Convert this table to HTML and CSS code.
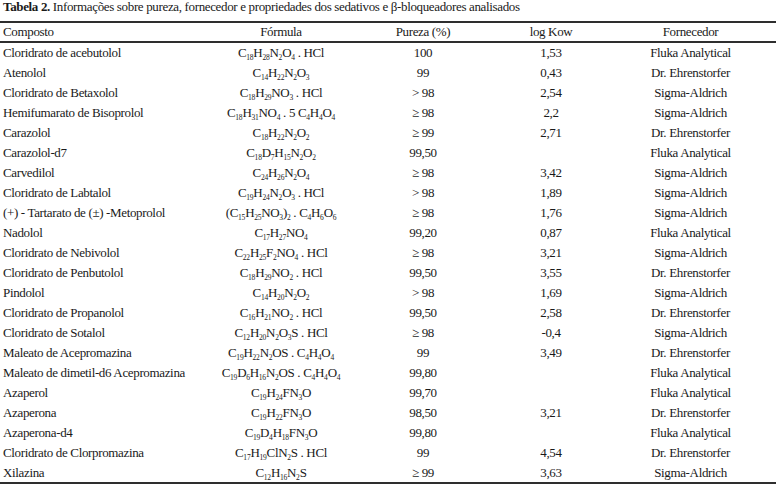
FILE: index.html
```html
<!DOCTYPE html>
<html lang="pt">
<head>
<meta charset="utf-8">
<title>Tabela 2</title>
<link rel="stylesheet" href="styles.css">
</head>
<body>
<div class="caption"><b>Tabela 2.</b> Informações sobre pureza, fornecedor e propriedades dos sedativos e β-bloqueadores analisados</div>
<div class="data" role="table">
<div class="row head" role="row"><span class="left">Composto</span><span>Fórmula</span><span>Pureza (%)</span><span>log Kow</span><span>Fornecedor</span></div>
<div class="body">
<div class="row" role="row"><span class="left">Cloridrato de acebutolol</span><span>C<sub>18</sub>H<sub>28</sub>N<sub>2</sub>O<sub>4</sub> . HCl</span><span>100</span><span>1,53</span><span>Fluka Analytical</span></div>
<div class="row" role="row"><span class="left">Atenolol</span><span>C<sub>14</sub>H<sub>22</sub>N<sub>2</sub>O<sub>3</sub></span><span>99</span><span>0,43</span><span>Dr. Ehrenstorfer</span></div>
<div class="row" role="row"><span class="left">Cloridrato de Betaxolol</span><span>C<sub>18</sub>H<sub>29</sub>NO<sub>3</sub> . HCl</span><span>&gt; 98</span><span>2,54</span><span>Sigma-Aldrich</span></div>
<div class="row" role="row"><span class="left">Hemifumarato de Bisoprolol</span><span>C<sub>18</sub>H<sub>31</sub>NO<sub>4</sub> . 5 C<sub>4</sub>H<sub>4</sub>O<sub>4</sub></span><span>≥ 98</span><span>2,2</span><span>Sigma-Aldrich</span></div>
<div class="row" role="row"><span class="left">Carazolol</span><span>C<sub>18</sub>H<sub>22</sub>N<sub>2</sub>O<sub>2</sub></span><span>≥ 99</span><span>2,71</span><span>Dr. Ehrenstorfer</span></div>
<div class="row" role="row"><span class="left">Carazolol-d7</span><span>C<sub>18</sub>D<sub>7</sub>H<sub>15</sub>N<sub>2</sub>O<sub>2</sub></span><span>99,50</span><span></span><span>Fluka Analytical</span></div>
<div class="row" role="row"><span class="left">Carvedilol</span><span>C<sub>24</sub>H<sub>26</sub>N<sub>2</sub>O<sub>4</sub></span><span>≥ 98</span><span>3,42</span><span>Sigma-Aldrich</span></div>
<div class="row" role="row"><span class="left">Cloridrato de Labtalol</span><span>C<sub>19</sub>H<sub>24</sub>N<sub>2</sub>O<sub>3</sub> . HCl</span><span>&gt; 98</span><span>1,89</span><span>Sigma-Aldrich</span></div>
<div class="row" role="row"><span class="left">(+) - Tartarato de (±) -Metoprolol</span><span>(C<sub>15</sub>H<sub>25</sub>NO<sub>3</sub>)<sub>2</sub> . C<sub>4</sub>H<sub>6</sub>O<sub>6</sub></span><span>≥ 98</span><span>1,76</span><span>Sigma-Aldrich</span></div>
<div class="row" role="row"><span class="left">Nadolol</span><span>C<sub>17</sub>H<sub>27</sub>NO<sub>4</sub></span><span>99,20</span><span>0,87</span><span>Fluka Analytical</span></div>
<div class="row" role="row"><span class="left">Cloridrato de Nebivolol</span><span>C<sub>22</sub>H<sub>25</sub>F<sub>2</sub>NO<sub>4</sub> . HCl</span><span>≥ 98</span><span>3,21</span><span>Sigma-Aldrich</span></div>
<div class="row" role="row"><span class="left">Cloridrato de Penbutolol</span><span>C<sub>18</sub>H<sub>29</sub>NO<sub>2</sub> . HCl</span><span>99,50</span><span>3,55</span><span>Dr. Ehrenstorfer</span></div>
<div class="row" role="row"><span class="left">Pindolol</span><span>C<sub>14</sub>H<sub>20</sub>N<sub>2</sub>O<sub>2</sub></span><span>&gt; 98</span><span>1,69</span><span>Sigma-Aldrich</span></div>
<div class="row" role="row"><span class="left">Cloridrato de Propanolol</span><span>C<sub>16</sub>H<sub>21</sub>NO<sub>2</sub> . HCl</span><span>99,50</span><span>2,58</span><span>Dr. Ehrenstorfer</span></div>
<div class="row" role="row"><span class="left">Cloridrato de Sotalol</span><span>C<sub>12</sub>H<sub>20</sub>N<sub>2</sub>O<sub>3</sub>S . HCl</span><span>≥ 98</span><span>-0,4</span><span>Sigma-Aldrich</span></div>
<div class="row" role="row"><span class="left">Maleato de Acepromazina</span><span>C<sub>19</sub>H<sub>22</sub>N<sub>2</sub>OS . C<sub>4</sub>H<sub>4</sub>O<sub>4</sub></span><span>99</span><span>3,49</span><span>Dr. Ehrenstorfer</span></div>
<div class="row" role="row"><span class="left">Maleato de dimetil-d6 Acepromazina</span><span>C<sub>19</sub>D<sub>6</sub>H<sub>16</sub>N<sub>2</sub>OS . C<sub>4</sub>H<sub>4</sub>O<sub>4</sub></span><span>99,80</span><span></span><span>Fluka Analytical</span></div>
<div class="row" role="row"><span class="left">Azaperol</span><span>C<sub>19</sub>H<sub>24</sub>FN<sub>3</sub>O</span><span>99,70</span><span></span><span>Fluka Analytical</span></div>
<div class="row" role="row"><span class="left">Azaperona</span><span>C<sub>19</sub>H<sub>22</sub>FN<sub>3</sub>O</span><span>98,50</span><span>3,21</span><span>Dr. Ehrenstorfer</span></div>
<div class="row" role="row"><span class="left">Azaperona-d4</span><span>C<sub>19</sub>D<sub>4</sub>H<sub>18</sub>FN<sub>3</sub>O</span><span>99,80</span><span></span><span>Fluka Analytical</span></div>
<div class="row" role="row"><span class="left">Cloridrato de Clorpromazina</span><span>C<sub>17</sub>H<sub>19</sub>ClN<sub>2</sub>S . HCl</span><span>99</span><span>4,54</span><span>Dr. Ehrenstorfer</span></div>
<div class="row" role="row"><span class="left">Xilazina</span><span>C<sub>12</sub>H<sub>16</sub>N<sub>2</sub>S</span><span>≥ 99</span><span>3,63</span><span>Sigma-Aldrich</span></div>
</div>
</div>
</body>
</html>
```
FILE: styles.css
```css
html, body {
  margin: 0;
  padding: 0;
  background: #ffffff;
}
body {
  font-family: "Liberation Serif", "Times New Roman", serif;
  font-size: 13px;
  letter-spacing: -0.35px;
  color: #1a1a1a;
}
.caption {
  height: 21px;
  line-height: 14px;
  padding-left: 3px;
  box-sizing: border-box;
}
.caption b {
  font-weight: bold;
}
.data {
  width: 776px;
  border-top: 2px solid #2e2e2e;
  border-bottom: 2px solid #2e2e2e;
}
.row {
  display: grid;
  grid-template-columns: 213px 136px 148px 108px 171px;
  height: 20px;
  align-items: center;
  line-height: 16px;
  white-space: nowrap;
}
.body .row:last-child {
  height: 19px;
}
.row > span {
  text-align: center;
}
.row > .left {
  text-align: left;
  padding-left: 3px;
}
.head {
  height: 18px;
  border-bottom: 2px solid #2e2e2e;
}
.data sub {
  font-size: 7.5px;
  letter-spacing: -0.2px;
  vertical-align: -2.5px;
  line-height: 0;
}
```
